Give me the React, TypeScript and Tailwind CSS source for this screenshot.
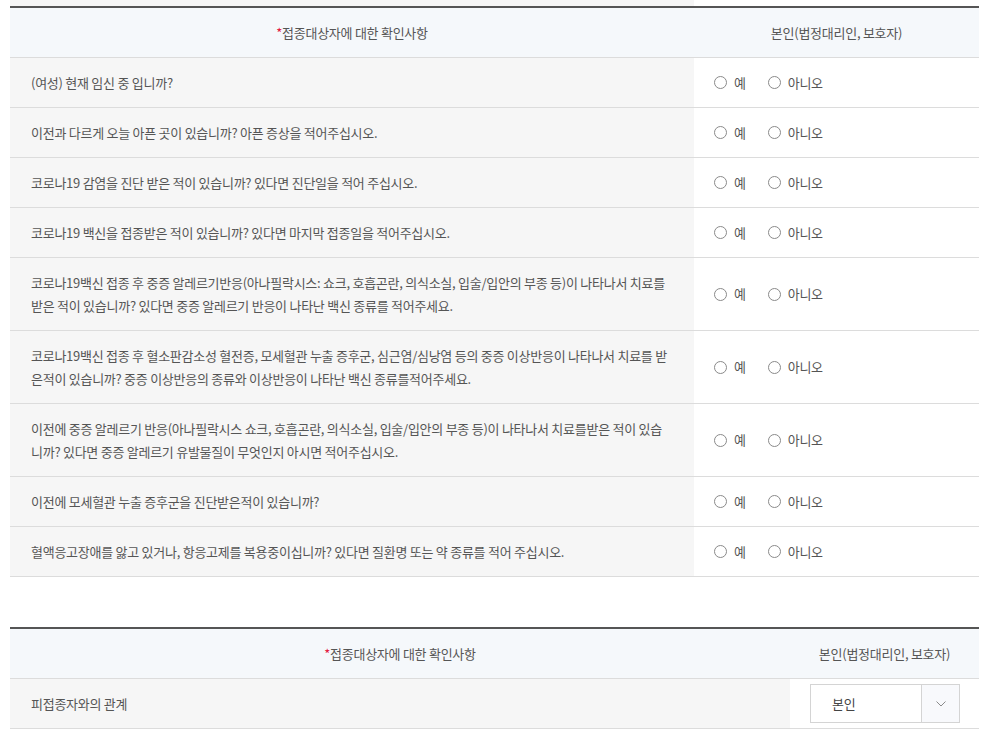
import React from "react";

const questions: { text: React.ReactNode; tall?: boolean }[] = [
  { text: "(여성) 현재 임신 중 입니까?" },
  { text: "이전과 다르게 오늘 아픈 곳이 있습니까? 아픈 증상을 적어주십시오." },
  { text: "코로나19 감염을 진단 받은 적이 있습니까? 있다면 진단일을 적어 주십시오." },
  { text: "코로나19 백신을 접종받은 적이 있습니까? 있다면 마지막 접종일을 적어주십시오." },
  {
    tall: true,
    text: (
      <>
        코로나19백신 접종 후 중증 알레르기반응(아나필락시스: 쇼크, 호흡곤란, 의식소실, 입술/입안의 부종 등)이 나타나서 치료를
        <br />
        받은 적이 있습니까? 있다면 중증 알레르기 반응이 나타난 백신 종류를 적어주세요.
      </>
    ),
  },
  {
    tall: true,
    text: (
      <>
        코로나19백신 접종 후 혈소판감소성 혈전증, 모세혈관 누출 증후군, 심근염/심낭염 등의 중증 이상반응이 나타나서 치료를 받
        <br />
        은적이 있습니까? 중증 이상반응의 종류와 이상반응이 나타난 백신 종류를적어주세요.
      </>
    ),
  },
  {
    tall: true,
    text: (
      <>
        이전에 중증 알레르기 반응(아나필락시스 쇼크, 호흡곤란, 의식소실, 입술/입안의 부종 등)이 나타나서 치료를받은 적이 있습
        <br />
        니까? 있다면 중증 알레르기 유발물질이 무엇인지 아시면 적어주십시오.
      </>
    ),
  },
  { text: "이전에 모세혈관 누출 증후군을 진단받은적이 있습니까?" },
  { text: "혈액응고장애를 앓고 있거나, 항응고제를 복용중이십니까? 있다면 질환명 또는 약 종류를 적어 주십시오." },
];

const Radio = ({ label }: { label: string }) => (
  <label className="flex items-center gap-[7px]">
    <span className="w-[13px] h-[13px] rounded-full border border-[#8a8a8a] bg-white" />
    <span>{label}</span>
  </label>
);

const Header = ({ leftW }: { leftW: string }) => (
  <div className="flex h-[50px] border-b border-[#dcdcdc] bg-[#f5f8fb]">
    <div className={`${leftW} flex items-center justify-center`}>
      <span className="text-[#e3173e]">*</span>접종대상자에 대한 확인사항
    </div>
    <div className="flex-1 flex items-center justify-center">본인(법정대리인, 보호자)</div>
  </div>
);

export default function App() {
  return (
    <div
      className="w-[989px] h-[741px] bg-white text-[13px] text-[#555] tracking-[-0.02em] overflow-hidden"
      style={{ fontFamily: '"Noto Sans CJK KR", "Noto Sans", sans-serif' }}
    >
      <div className="mx-[10px]">
        <div className="flex h-[6px]">
          <div className="w-[684px] bg-[#f6f6f6]" />
          <div className="flex-1" />
        </div>
        <div className="border-t-2 border-[#555]">
          <Header leftW="w-[684px]" />
          {questions.map((q, i) => (
            <div key={i} className={`flex border-b border-[#dcdcdc] ${q.tall ? "h-[73px]" : "h-[50px]"}`}>
              <div className="w-[684px] bg-[#f6f6f6] flex items-center pl-[21px] leading-[23px]">
                <div>{q.text}</div>
              </div>
              <div className="flex-1 flex items-center pl-[20px] gap-[22px]">
                <Radio label="예" />
                <Radio label="아니오" />
              </div>
            </div>
          ))}
        </div>

        <div className="mt-[50px] border-t-2 border-[#555]">
          <Header leftW="w-[780px]" />
          <div className="flex h-[50px] border-b border-[#dcdcdc]">
            <div className="w-[780px] bg-[#f6f6f6] flex items-center pl-[21px]">피접종자와의 관계</div>
            <div className="flex-1 flex items-center pl-[20px]">
              <div className="flex w-[150px] h-[39px] border border-[#d4d4d4] bg-white">
                <div className="flex-1 flex items-center pl-[21px] text-[#444]">본인</div>
                <div className="w-[38px] border-l border-[#d4d4d4] bg-[#f8f9fc] flex items-center justify-center">
                  <svg width="10" height="6" viewBox="0 0 10 6" fill="none">
                    <path d="M0.5 0.5L5 5L9.5 0.5" stroke="#8a8a8a" strokeWidth="1" />
                  </svg>
                </div>
              </div>
            </div>
          </div>
        </div>
      </div>
    </div>
  );
}
